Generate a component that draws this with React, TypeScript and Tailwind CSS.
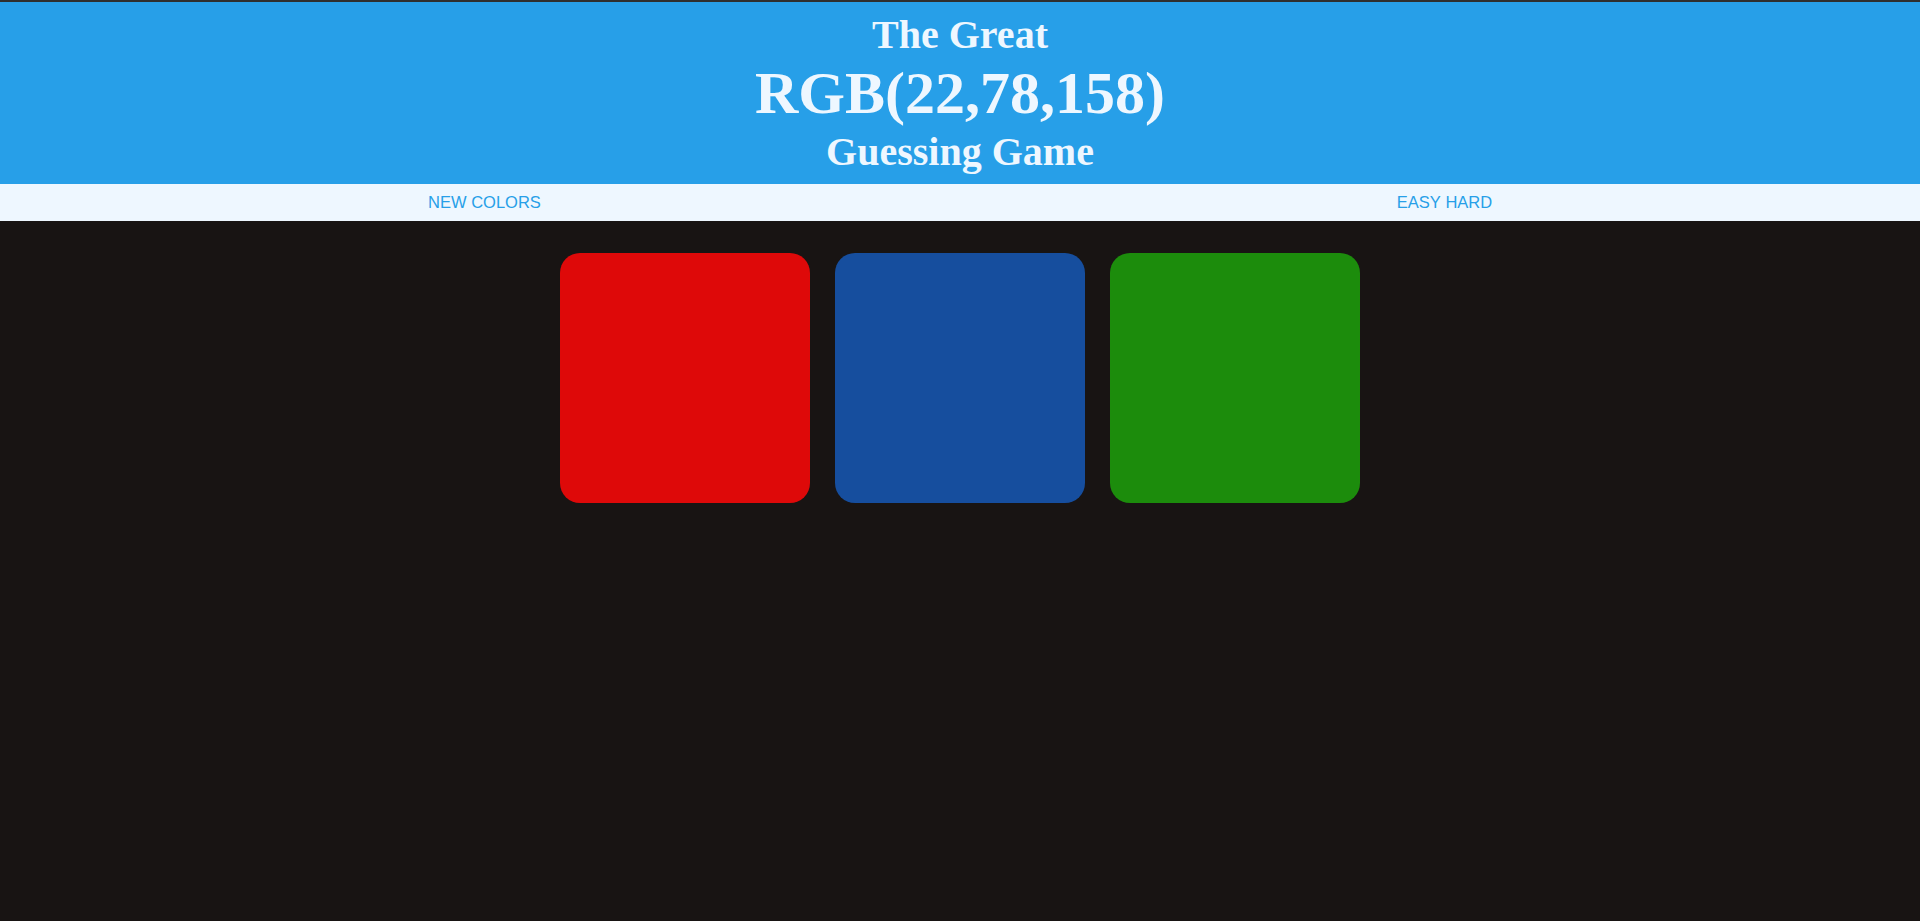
const squares = ["#de0909", "#164e9e", "#1c8c0c"];

export default function App() {
  return (
    <div className="min-h-[921px] bg-[#181413]">
      <header className="border-t-2 border-[#2f2f2f] bg-[#279fe8] pt-[13px] pb-[12px] text-center text-[#eef7ff] font-[family-name:'Liberation_Serif',serif] font-bold">
        <div className="text-[40px] leading-none font-bold">The Great</div>
        <div className="mt-[8px] text-[60px] leading-none font-bold">RGB(22,78,158)</div>
        <div className="mt-[9px] text-[40px] leading-none font-bold">Guessing Game</div>
      </header>

      <nav className="grid h-[37px] grid-cols-2 items-center bg-[#eef7ff] font-[family-name:'Liberation_Sans',Arial,sans-serif] text-[16.5px] text-[#279fe8]">
        <button className="pl-[9px] text-center uppercase">New Colors</button>
        <div className="pl-[9px] text-center">
          <button className="uppercase">Easy</button> <button className="uppercase">Hard</button>
        </div>
      </nav>

      <main className="mt-[32px] flex justify-center gap-[25px]">
        {squares.map((c) => (
          <div
            key={c}
            className="h-[250px] w-[250px] rounded-[20px]"
            style={{ background: c }}
          />
        ))}
      </main>
    </div>
  );
}
